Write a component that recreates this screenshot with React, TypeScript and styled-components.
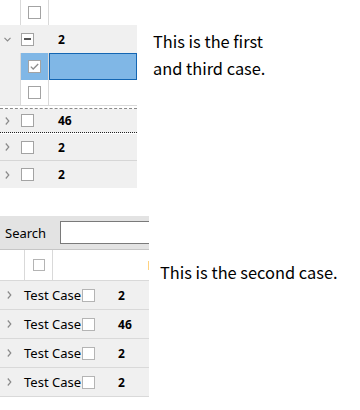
import React from "react";
import styled, { createGlobalStyle } from "styled-components";

const GlobalStyle = createGlobalStyle`
  body {
    margin: 0;
    background: #ffffff;
    font-family: "Noto Sans", "Liberation Sans", sans-serif;
  }
`;

const Page = styled.div`
  width: 360px;
  height: 410px;
  overflow: hidden;
`;

const Section = styled.div<{ $top: number }>`
  display: flex;
  align-items: flex-start;
  margin-top: ${(p) => p.$top}px;
`;

const Note = styled.div<{ $left: number; $top: number }>`
  margin-left: ${(p) => p.$left}px;
  padding-top: ${(p) => p.$top}px;
  font-family: "Noto Sans CJK KR", "Noto Sans", sans-serif;
  font-size: 16.4px;
  line-height: 27px;
  color: #000;
  white-space: nowrap;
`;

// grid parts
const Grid = styled.div<{ $width: number }>`
  width: ${(p) => p.$width}px;
  font-size: 12px;
  color: #000;
`;

const HeaderRow = styled.div<{ $height: number; $line?: boolean }>`
  display: flex;
  height: ${(p) => p.$height}px;
  background: #fff;
  border-bottom: ${(p) => (p.$line ? "1px solid #d9d9d9" : "none")};
`;

const Cell = styled.div<{ $width?: number; $bg?: string }>`
  display: flex;
  align-items: center;
  justify-content: center;
  width: ${(p) => (p.$width ? `${p.$width}px` : "auto")};
  flex: ${(p) => (p.$width ? "none" : "1")};
  background: ${(p) => p.$bg || "transparent"};
  border-right: 1px solid #d9d9d9;
  box-sizing: content-box;
`;

const FillCell = styled.div<{ $selected?: boolean }>`
  flex: 1;
  background: ${(p) => (p.$selected ? "#80b7e6" : "#fff")};
  border: ${(p) => (p.$selected ? "1px solid #1466b3" : "none")};
`;

const ChildRow = styled.div<{ $height: number; $line?: boolean }>`
  display: flex;
  height: ${(p) => p.$height}px;
  border-bottom: ${(p) => (p.$line ? "1px solid #d9d9d9" : "none")};
`;

const GroupRow = styled.div<{ $height: number; $border?: string; $gap?: number }>`
  display: flex;
  align-items: center;
  height: ${(p) => p.$height}px;
  margin-top: ${(p) => p.$gap || 0}px;
  background: #f0f0f0;
  border-bottom: ${(p) => p.$border || "none"};
`;

const Expander = styled.div<{ $width: number; $pad: number }>`
  width: ${(p) => p.$width}px;
  padding-left: ${(p) => p.$pad}px;
  box-sizing: border-box;
  display: flex;
  align-items: center;
`;

const Count = styled.span<{ $left: number }>`
  margin-left: ${(p) => p.$left}px;
  font-weight: 700;
  font-size: 12px;
`;

const Dashed = styled.div`
  height: 0;
  margin-top: 2px;
  border-top: 1px dashed #8a8a8a;
`;

const Box = styled.span<{ $size?: number; $color?: string }>`
  display: inline-flex;
  align-items: center;
  justify-content: center;
  width: ${(p) => p.$size || 13}px;
  height: ${(p) => p.$size || 13}px;
  box-sizing: border-box;
  border: 1px solid ${(p) => p.$color || "#a3a3a3"};
  background: #fff;
  flex: none;
`;

const SearchBar = styled.div`
  display: flex;
  align-items: center;
  height: 33px;
  background: #e3e3e3;
  border-bottom: 1px solid #c6c6c6;
  font-size: 13px;
`;

const SearchLabel = styled.span`
  width: 60px;
  padding-left: 5px;
  box-sizing: border-box;
`;

const SearchInput = styled.div`
  flex: 1;
  height: 23px;
  box-sizing: border-box;
  border: 1px solid #7a7a7a;
  border-right: none;
  background: #fff;
`;

const CaseLabel = styled.span`
  font-size: 13px;
  margin-left: 11px;
  margin-right: 1px;
`;

const ResizeMark = styled.span`
  margin-left: auto;
  width: 1px;
  height: 9px;
  background: #ffd27f;
`;

const TailCell = styled.div`
  flex: 1;
  display: flex;
  align-items: center;
`;

const Chevron = ({ down }: { down?: boolean }) =>
  down ? (
    <svg width="7" height="5" viewBox="0 0 7 5">
      <polyline points="0.5,0.8 3.5,3.8 6.5,0.8" fill="none" stroke="#8a8a8a" strokeWidth="1.2" />
    </svg>
  ) : (
    <svg width="5" height="8" viewBox="0 0 5 8">
      <polyline points="0.8,0.5 3.8,4 0.8,7.5" fill="none" stroke="#8a8a8a" strokeWidth="1.2" />
    </svg>
  );

const Minus = () => (
  <svg width="7" height="2" viewBox="0 0 7 2">
    <rect width="7" height="2" fill="#555" />
  </svg>
);

const Check = () => (
  <svg width="9" height="7" viewBox="0 0 9 7">
    <polyline points="0.8,3.6 3.2,6 8.2,1" fill="none" stroke="#8c8c8c" strokeWidth="1.3" />
  </svg>
);

function TopGrid() {
  return (
    <Grid $width={137}>
      <HeaderRow $height={25}>
        <Cell $width={20} />
        <Cell $width={27}>
          <Box />
        </Cell>
        <TailCell />
      </HeaderRow>
      <GroupRow $height={28}>
        <Expander $width={21} $pad={4}>
          <Chevron down />
        </Expander>
        <Box>
          <Minus />
        </Box>
        <Count $left={24}>2</Count>
      </GroupRow>
      <ChildRow $height={27}>
        <Cell $width={20} $bg="#f0f0f0" />
        <Cell $width={27} $bg="#80b7e6">
          <Box>
            <Check />
          </Box>
        </Cell>
        <FillCell $selected />
      </ChildRow>
      <ChildRow $height={25} $line>
        <Cell $width={20} $bg="#f0f0f0" />
        <Cell $width={27} $bg="#fff">
          <Box />
        </Cell>
        <FillCell />
      </ChildRow>
      <Dashed />
      <GroupRow $height={23} $border="1px dotted #222">
        <Expander $width={21} $pad={5}>
          <Chevron />
        </Expander>
        <Box />
        <Count $left={24}>46</Count>
      </GroupRow>
      <GroupRow $height={26} $gap={1} $border="1px solid #d6d6d6">
        <Expander $width={21} $pad={5}>
          <Chevron />
        </Expander>
        <Box />
        <Count $left={24}>2</Count>
      </GroupRow>
      <GroupRow $height={27}>
        <Expander $width={21} $pad={5}>
          <Chevron />
        </Expander>
        <Box />
        <Count $left={24}>2</Count>
      </GroupRow>
    </Grid>
  );
}

const cases = ["2", "46", "2", "2"];

function BottomGrid() {
  return (
    <Grid $width={149}>
      <SearchBar>
        <SearchLabel>Search</SearchLabel>
        <SearchInput />
      </SearchBar>
      <HeaderRow $height={30} $line>
        <Cell $width={24} />
        <Cell $width={27}>
          <Box $size={12} $color="#b4b4b4" />
        </Cell>
        <TailCell>
          <ResizeMark />
        </TailCell>
      </HeaderRow>
      {cases.map((n, i) => (
        <GroupRow key={i} $height={28} $border="1px solid #d9d9d9">
          <Expander $width={13} $pad={7}>
            <Chevron />
          </Expander>
          <CaseLabel>Test Case</CaseLabel>
          <Box $size={13} $color="#b4b4b4" />
          <Count $left={23}>{n}</Count>
        </GroupRow>
      ))}
    </Grid>
  );
}

export default function App() {
  return (
    <Page>
      <GlobalStyle />
      <Section $top={0}>
        <TopGrid />
        <Note $left={16} $top={28}>
          This is the first
          <br />
          and third case.
        </Note>
      </Section>
      <Section $top={28}>
        <BottomGrid />
        <Note $left={11} $top={43}>This is the second case.</Note>
      </Section>
    </Page>
  );
}
